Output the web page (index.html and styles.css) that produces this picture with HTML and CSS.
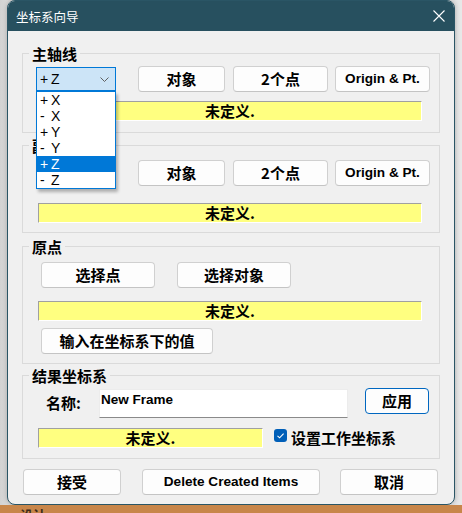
FILE: index.html
```html
<!DOCTYPE html>
<html lang="zh">
<head>
<meta charset="utf-8">
<title>坐标系向导</title>
<link rel="stylesheet" href="styles.css">
</head>
<body>
<div class="screen">
  <div class="desk">
    <div class="window">
      <div class="titlebar">
        <span class="title">坐标系向导</span>
        <svg class="close" width="12" height="12" viewBox="0 0 12 12"><path d="M0.5 0.5 L11.5 11.5 M11.5 0.5 L0.5 11.5" stroke="#ffffff" stroke-width="1.1" fill="none"/></svg>
      </div>
      <div class="content">
        <fieldset class="group">
          <legend>主轴线</legend>
          <div class="body g1">
            <div class="row axis-row">
              <div class="combo focused">
                <span class="val"><span class="sign">+</span>Z</span>
                <svg class="chev" width="9" height="5" viewBox="0 0 9 5"><path d="M0.5 0.5 L4.5 4.5 L8.5 0.5" stroke="#5f5f5f" stroke-width="1" fill="none"/></svg>
                <ul class="dropdown">
                  <li><span class="sign">+</span>X</li>
                  <li><span class="sign">-</span>X</li>
                  <li><span class="sign">+</span>Y</li>
                  <li><span class="sign">-</span>Y</li>
                  <li class="sel"><span class="sign">+</span>Z</li>
                  <li><span class="sign">-</span>Z</li>
                </ul>
              </div>
              <button class="btn b-obj">对象</button>
              <button class="btn b-pts">2个点</button>
              <button class="btn b-org latin">Origin &amp; Pt.</button>
            </div>
            <div class="status s-full">未定义.</div>
          </div>
        </fieldset>

        <fieldset class="group gap-2">
          <legend>副轴线</legend>
          <div class="body g2">
            <div class="row axis-row">
              <div class="combo"></div>
              <button class="btn b-obj">对象</button>
              <button class="btn b-pts">2个点</button>
              <button class="btn b-org latin">Origin &amp; Pt.</button>
            </div>
            <div class="status s-full">未定义.</div>
          </div>
        </fieldset>

        <fieldset class="group gap-3">
          <legend>原点</legend>
          <div class="body g3">
            <div class="row origin-row">
              <button class="btn b-sel">选择点</button>
              <button class="btn b-sel">选择对象</button>
            </div>
            <div class="status s-full">未定义.</div>
            <button class="btn b-input">输入在坐标系下的值</button>
          </div>
        </fieldset>

        <fieldset class="group gap-4">
          <legend>结果坐标系</legend>
          <div class="body g4">
            <div class="row name-row">
              <span class="label">名称:</span>
              <div class="textbox">New Frame</div>
              <button class="btn default b-apply">应用</button>
            </div>
            <div class="row result-row">
              <div class="status s-short">未定义.</div>
              <span class="check">
                <svg width="13" height="13" viewBox="0 0 13 13"><rect width="13" height="13" rx="3" fill="#005fb8"/><path d="M3.5 6.8 L5.6 8.8 L9.6 4.6" stroke="#ffffff" stroke-width="1.1" fill="none"/></svg>
              </span>
              <span class="check-label">设置工作坐标系</span>
            </div>
          </div>
        </fieldset>

        <div class="footer">
          <button class="btn b-accept">接受</button>
          <button class="btn b-delete latin">Delete Created Items</button>
          <button class="btn b-cancel">取消</button>
        </div>
      </div>
    </div>
  </div>
  <div class="taskbar"><span>设计</span></div>
</div>
</body>
</html>
```

FILE: styles.css
```css
html, body {
  margin: 0;
  padding: 0;
}

body {
  width: 462px;
  height: 513px;
  overflow: hidden;
  background: #dcdcdc;
  font-family: "Noto Sans CJK SC", "Liberation Sans", sans-serif;
  color: #000;
}

.screen {
  display: flex;
  flex-direction: column;
  height: 513px;
}

.desk {
  height: 505px;
  padding-left: 7px;
  display: flex;
  background: linear-gradient(to right, #d2d2d2 0, #dadada 7px, #e4e4e4 455px, #e8e8e8 462px);
}

.window {
  width: 448px;
  height: 505px;
  flex: none;
  box-sizing: border-box;
  border: 1px solid #2a5565;
  border-radius: 8px;
  background: #f0f0f0;
  overflow: hidden;
  display: flex;
  flex-direction: column;
  box-shadow: 0 0 5px rgba(0, 0, 0, 0.25);
}

.titlebar {
  height: 30px;
  flex: none;
  background: #27505f;
  display: flex;
  align-items: center;
  justify-content: space-between;
  padding: 0 9px 0 8px;
  color: #ffffff;
}

.title {
  font-size: 12.5px;
  line-height: 16px;
  margin-top: 1px;
}

.close {
  display: block;
}

.content {
  padding: 14px 14px 0 14px;
}

.group {
  margin: 0;
  padding: 0;
  border: 1px solid #dadada;
  min-width: 0;
}

.group legend {
  font-size: 15px;
  font-weight: 700;
  line-height: 17px;
  padding: 0 3px;
  margin-left: 6px;
}

.gap-2 { margin-top: 4px; }
.gap-3 { margin-top: 5px; }
.gap-4 { margin-top: 3px; }

.body {
  padding-left: 13px;
  padding-right: 0;
}

.g1 { padding-top: 4px; padding-bottom: 11px; }
.g2 { padding-top: 6px; padding-bottom: 9px; }
.g3 { padding-top: 7px; padding-bottom: 9px; }
.g4 { padding-top: 4px; padding-bottom: 10px; }

.row {
  display: flex;
  align-items: center;
}

.row > * {
  flex: none;
}

.axis-row {
  height: 26px;
}

.btn {
  box-sizing: border-box;
  height: 26px;
  margin: 0;
  padding: 0;
  background: #fdfdfd;
  border: 1px solid #d0d0d0;
  border-bottom-color: #c4c4c4;
  border-radius: 4px;
  font-family: "Noto Sans CJK SC", "Liberation Sans", sans-serif;
  font-size: 15px;
  font-weight: 700;
  line-height: 18px;
  color: #000;
  text-align: center;
}

.btn.latin {
  font-family: "Liberation Sans", "Noto Sans CJK SC", sans-serif;
  font-size: 13.6px;
}

.btn.default {
  border: 1px solid #0067c0;
}

.b-obj { width: 87px; margin-left: 22px; }
.b-pts { width: 95px; margin-left: 8px; }
.b-org { width: 95px; margin-left: 7px; }

.combo {
  position: relative;
  box-sizing: border-box;
  width: 80px;
  height: 24px;
  background: #fdfdfd;
  border: 1px solid #d0d0d0;
  display: flex;
  align-items: center;
  justify-content: space-between;
  padding: 0 6px 0 3px;
  font-family: "Liberation Sans", sans-serif;
  font-size: 14px;
}

.combo.focused {
  background: #cce4f7;
  border-color: #0078d7;
}

.val {
  line-height: 16px;
}

.sign {
  display: inline-block;
  width: 11px;
}

.chev {
  display: block;
}

.dropdown {
  position: absolute;
  left: -1px;
  top: 23px;
  z-index: 5;
  width: 80px;
  box-sizing: border-box;
  margin: 0;
  padding: 0;
  list-style: none;
  background: #ffffff;
  border: 1px solid #0078d7;
  box-shadow: 2px 3px 3px rgba(0, 0, 0, 0.28);
}

.dropdown li {
  height: 16px;
  line-height: 16px;
  padding-left: 3px;
  font-family: "Liberation Sans", sans-serif;
  font-size: 14px;
  color: #000;
}

.dropdown li.sel {
  background: #0078d7;
  color: #ffffff;
}

.status {
  box-sizing: border-box;
  height: 20px;
  background: #ffff80;
  border-top: 1px solid #a0a0a0;
  border-left: 1px solid #a0a0a0;
  border-right: 1px solid #ffffff;
  border-bottom: 1px solid #ffffff;
  font-size: 15px;
  font-weight: 700;
  line-height: 18px;
  text-align: center;
}

.s-full {
  width: 384px;
  margin-left: 2px;
}

.g1 .status { margin-top: 9px; }
.g2 .status { margin-top: 17px; }
.g3 .status { margin-top: 13px; }

.origin-row {
  padding-left: 5px;
}

.b-sel {
  width: 114px;
}

.b-sel + .b-sel {
  margin-left: 22px;
}

.b-input {
  display: block;
  width: 172px;
  margin-top: 7px;
  margin-left: 5px;
}

.name-row {
  align-items: flex-start;
}

.label {
  margin-left: 10px;
  margin-top: 6px;
  width: 53px;
  font-size: 15px;
  font-weight: 700;
  line-height: 18px;
}

.textbox {
  box-sizing: border-box;
  width: 249px;
  height: 29px;
  margin-top: 1px;
  background: #ffffff;
  border: 1px solid #ececec;
  border-bottom-color: #8a8a8a;
  padding: 2px 0 0 1px;
  font-family: "Liberation Sans", sans-serif;
  font-size: 13.5px;
  font-weight: 700;
  line-height: 16px;
}

.b-apply {
  width: 64px;
  margin-left: 17px;
}

.result-row {
  margin-top: 10px;
}

.s-short {
  width: 225px;
  margin-left: 2px;
}

.check {
  display: flex;
  margin-left: 11px;
  margin-top: 1px;
  align-self: flex-start;
}

.check svg {
  display: block;
}

.check-label {
  margin-left: 4px;
  font-size: 15px;
  font-weight: 700;
  line-height: 18px;
}

.footer {
  display: flex;
  margin-top: 10px;
  padding-left: 1px;
}

.footer > * {
  flex: none;
}

.b-accept { width: 98px; }
.b-delete { width: 178px; margin-left: 21px; }
.b-cancel { width: 98px; margin-left: 20px; }

.taskbar {
  height: 8px;
  overflow: hidden;
  background: #c8864a;
  padding-left: 20px;
}

.taskbar span {
  display: block;
  font-size: 13px;
  font-weight: 700;
  line-height: 13px;
  margin-top: 3px;
  color: #3a2a1a;
}
```
